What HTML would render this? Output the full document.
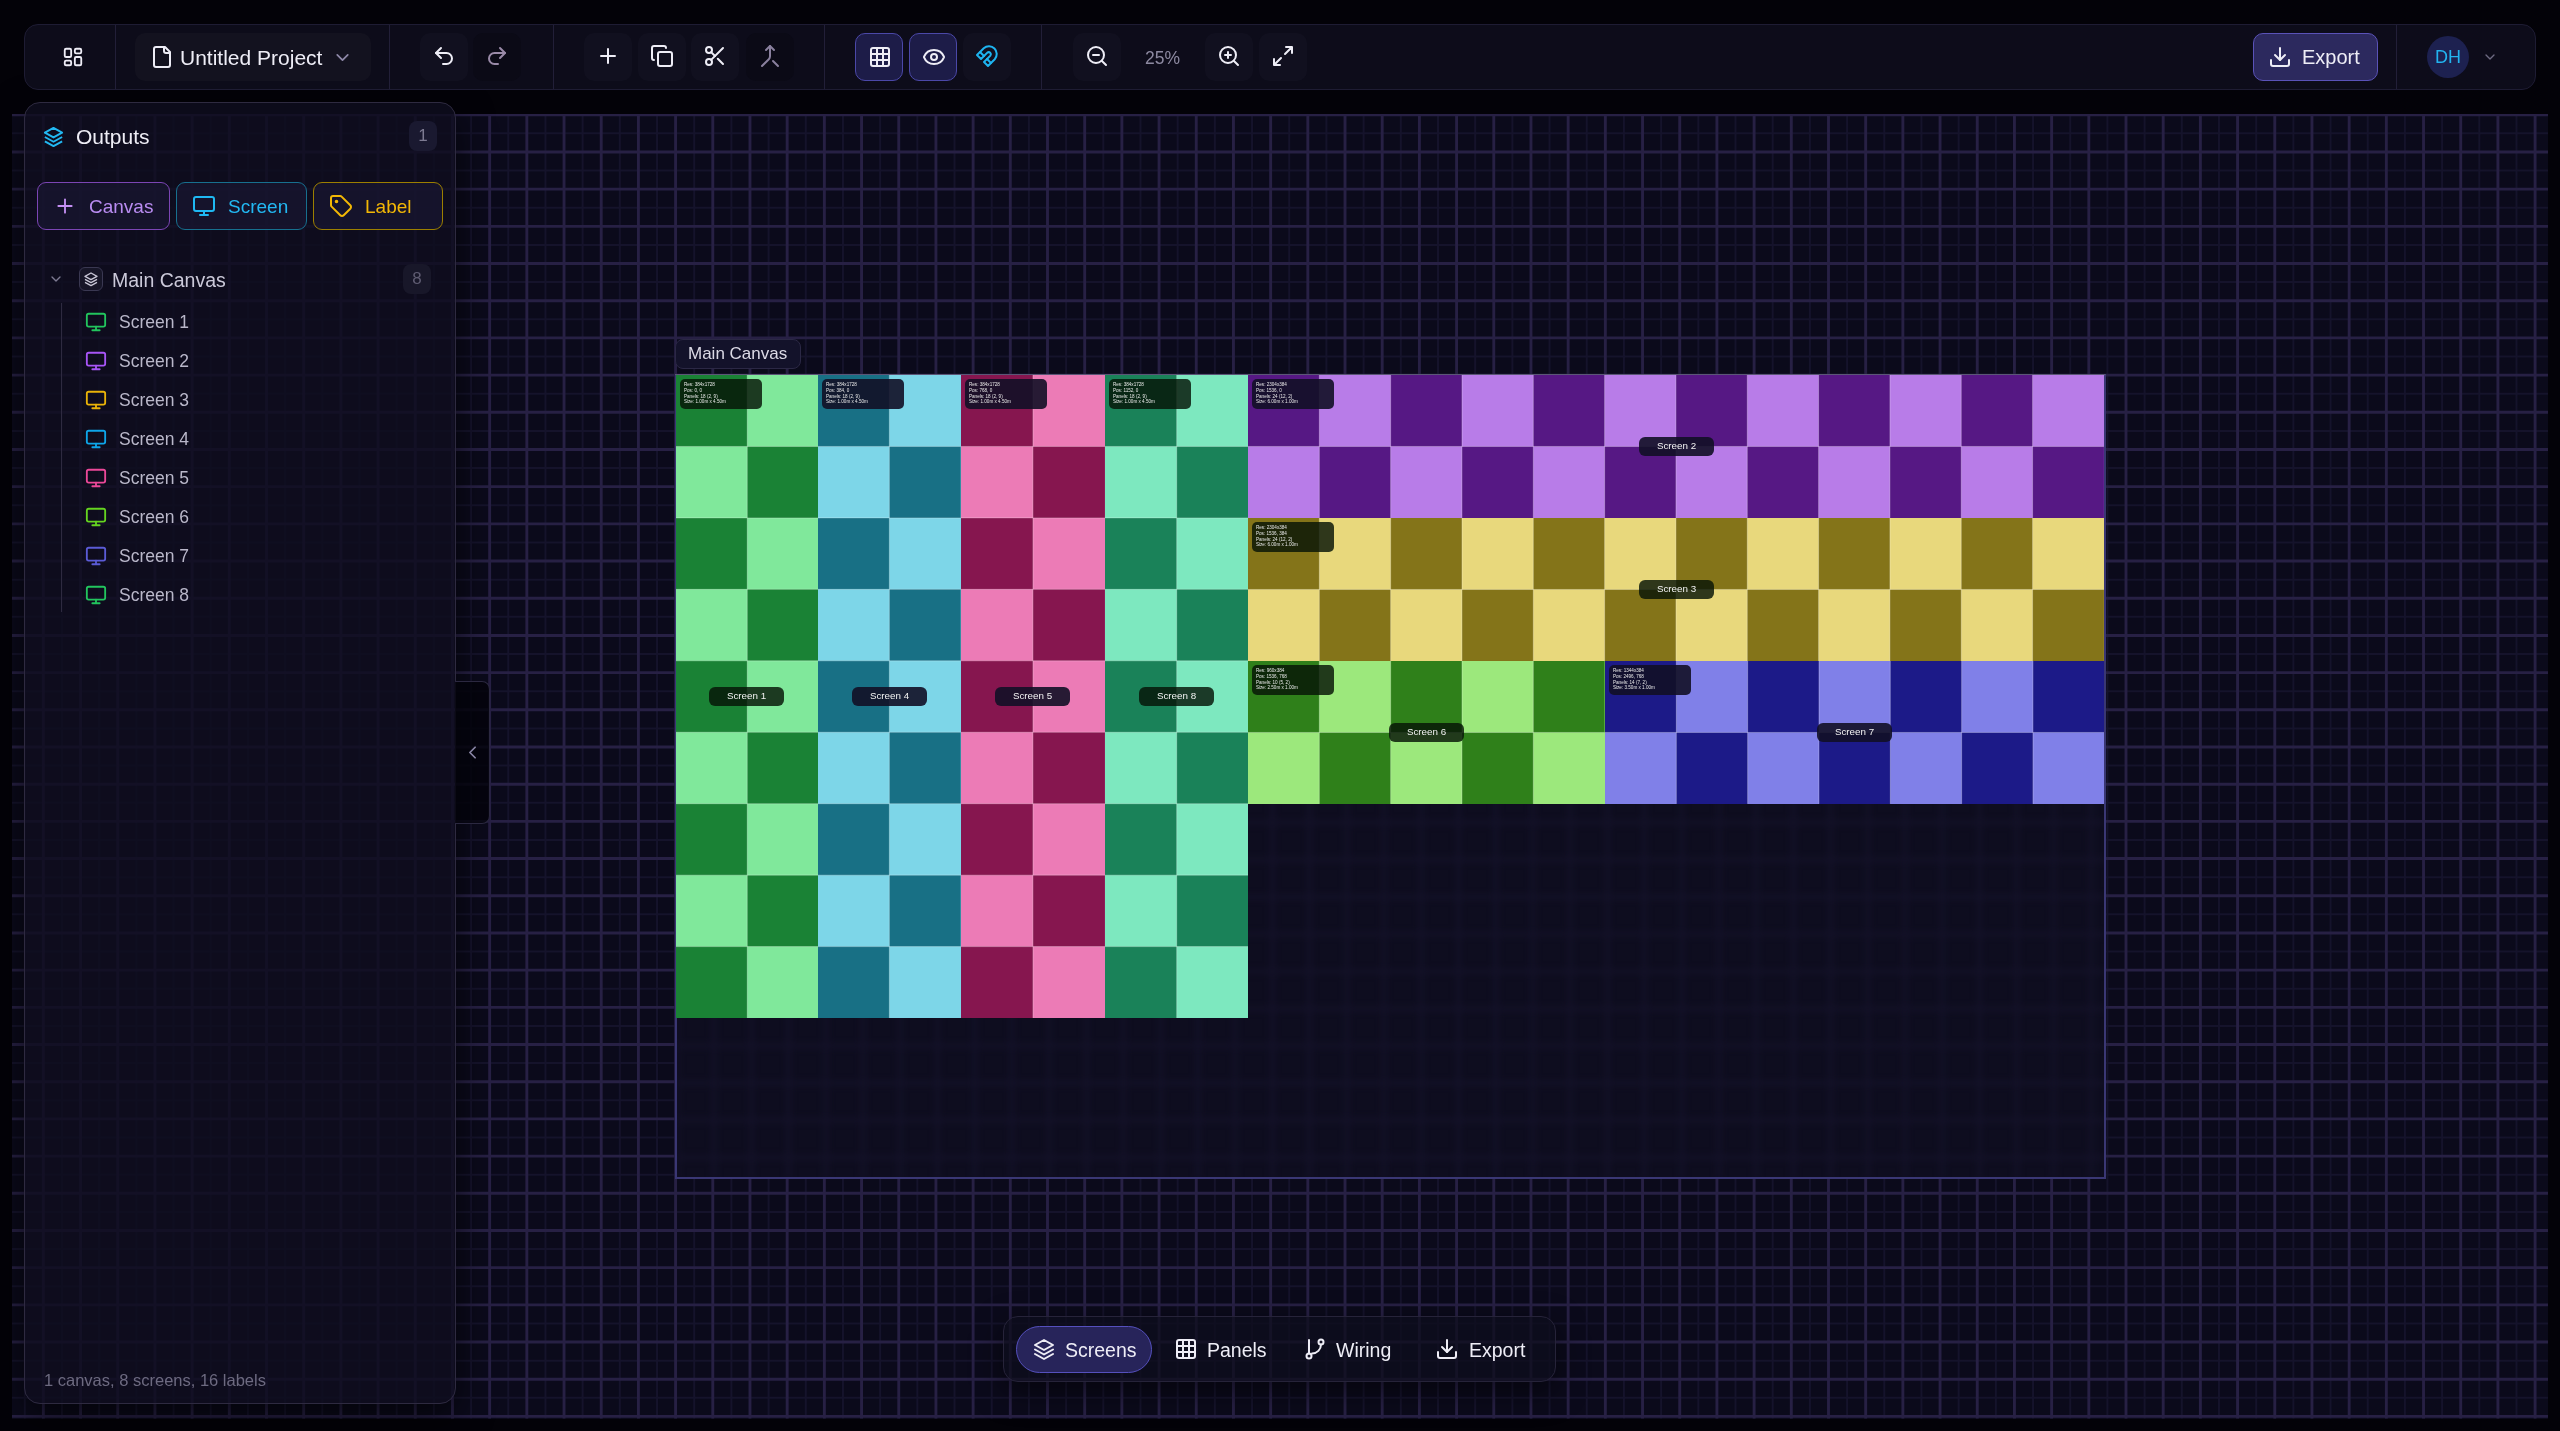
<!DOCTYPE html>
<html><head><meta charset="utf-8"><title>Untitled Project</title>
<style>
*{box-sizing:border-box;margin:0;padding:0}
html,body{width:2560px;height:1431px;overflow:hidden;background:#030208;font-family:"Liberation Sans",sans-serif;color:#e8e6f0}
.abs{position:absolute}
.t{will-change:transform}
svg{display:block}
.tb{position:absolute;left:24px;top:24px;width:2512px;height:66px;border-radius:14px;background:#0d0c1a;border:1px solid #1e1c33}
.sep{position:absolute;top:25px;width:1px;height:64px;background:#221f38}
.ib{position:absolute;top:33px;width:48px;height:48px;border-radius:10px;background:#11101f}
.ib svg{position:absolute;left:12px;top:10.5px}
.act{background:#1d1c48;border:1px solid #4b48a8}
.side{position:absolute;left:24px;top:102px;width:432px;height:1302px;border-radius:16px;background:rgba(15,14,30,0.82);border:1px solid #2e2a40;box-shadow:0 12px 36px rgba(0,0,0,0.65)}
.btn{position:absolute;top:182px;height:48px;border-radius:9px;background:rgba(24,22,48,0.75);border:1.2px solid}
.row{position:absolute;left:87px;height:20px}
.row span{position:absolute;left:32px;top:-2px;font-size:17.5px;color:#b9b7c9;white-space:nowrap}
.dock{position:absolute;left:1003px;top:1316px;width:553px;height:66px;border-radius:15px;background:rgba(14,13,28,0.74);border:1px solid #262339;box-shadow:0 10px 30px rgba(0,0,0,0.5)}
.dbtn{position:absolute;top:9px;height:47px;border-radius:24px}
.dbtn span{position:absolute;top:11px;font-size:19.5px;color:#e6e4f0;white-space:nowrap}
.pill{will-change:transform;position:absolute;height:19px;border-radius:6px;font-size:9.8px;color:#f2f2f2;text-align:center;line-height:18px;white-space:nowrap}
.badge{will-change:transform;position:absolute;width:82px;height:30px;border-radius:5px;font-size:5.6px;line-height:6.95px;color:#e8e8e8;padding:2.6px 0 0 4px;white-space:nowrap}
</style></head><body>

<div class="abs" style="left:12px;top:114px;width:2536px;height:1304.5px;background:#0b0a1b;overflow:hidden">
<svg width="2536" height="1304.5" viewBox="12 114 2536 1304.5">
<path d="M-12.41 114V1418.5M24.78 114V1418.5M61.97 114V1418.5M99.16 114V1418.5M136.35 114V1418.5M173.54 114V1418.5M210.73 114V1418.5M247.92 114V1418.5M285.11 114V1418.5M322.30 114V1418.5M359.49 114V1418.5M396.68 114V1418.5M433.87 114V1418.5M471.06 114V1418.5M508.25 114V1418.5M545.44 114V1418.5M582.62 114V1418.5M619.82 114V1418.5M657.01 114V1418.5M694.20 114V1418.5M731.38 114V1418.5M768.58 114V1418.5M805.77 114V1418.5M842.96 114V1418.5M880.14 114V1418.5M917.34 114V1418.5M954.53 114V1418.5M991.72 114V1418.5M1028.90 114V1418.5M1066.10 114V1418.5M1103.29 114V1418.5M1140.48 114V1418.5M1177.66 114V1418.5M1214.86 114V1418.5M1252.04 114V1418.5M1289.23 114V1418.5M1326.42 114V1418.5M1363.62 114V1418.5M1400.81 114V1418.5M1438.00 114V1418.5M1475.19 114V1418.5M1512.38 114V1418.5M1549.56 114V1418.5M1586.75 114V1418.5M1623.94 114V1418.5M1661.13 114V1418.5M1698.33 114V1418.5M1735.52 114V1418.5M1772.71 114V1418.5M1809.89 114V1418.5M1847.08 114V1418.5M1884.27 114V1418.5M1921.46 114V1418.5M1958.65 114V1418.5M1995.85 114V1418.5M2033.04 114V1418.5M2070.22 114V1418.5M2107.41 114V1418.5M2144.60 114V1418.5M2181.79 114V1418.5M2218.98 114V1418.5M2256.17 114V1418.5M2293.36 114V1418.5M2330.55 114V1418.5M2367.74 114V1418.5M2404.93 114V1418.5M2442.12 114V1418.5M2479.31 114V1418.5M2516.50 114V1418.5M2553.69 114V1418.5M2590.88 114V1418.5M12 58.99H2548M12 96.18H2548M12 133.37H2548M12 170.56H2548M12 207.75H2548M12 244.94H2548M12 282.12H2548M12 319.32H2548M12 356.50H2548M12 393.70H2548M12 430.88H2548M12 468.08H2548M12 505.26H2548M12 542.46H2548M12 579.64H2548M12 616.84H2548M12 654.03H2548M12 691.22H2548M12 728.40H2548M12 765.60H2548M12 802.79H2548M12 839.98H2548M12 877.16H2548M12 914.36H2548M12 951.54H2548M12 988.74H2548M12 1025.92H2548M12 1063.12H2548M12 1100.31H2548M12 1137.50H2548M12 1174.69H2548M12 1211.88H2548M12 1249.06H2548M12 1286.25H2548M12 1323.44H2548M12 1360.63H2548M12 1397.83H2548M12 1435.02H2548M12 1472.21H2548" stroke="#15132b" stroke-width="2" fill="none"/>
<path d="M-31.01 114V1418.5M6.18 114V1418.5M43.37 114V1418.5M80.56 114V1418.5M117.75 114V1418.5M154.94 114V1418.5M192.13 114V1418.5M229.32 114V1418.5M266.51 114V1418.5M303.70 114V1418.5M340.89 114V1418.5M378.08 114V1418.5M415.27 114V1418.5M452.46 114V1418.5M489.65 114V1418.5M526.84 114V1418.5M564.03 114V1418.5M601.22 114V1418.5M638.41 114V1418.5M675.60 114V1418.5M712.79 114V1418.5M749.98 114V1418.5M787.17 114V1418.5M824.36 114V1418.5M861.55 114V1418.5M898.74 114V1418.5M935.93 114V1418.5M973.12 114V1418.5M1010.31 114V1418.5M1047.50 114V1418.5M1084.69 114V1418.5M1121.88 114V1418.5M1159.07 114V1418.5M1196.26 114V1418.5M1233.45 114V1418.5M1270.64 114V1418.5M1307.83 114V1418.5M1345.02 114V1418.5M1382.21 114V1418.5M1419.40 114V1418.5M1456.59 114V1418.5M1493.78 114V1418.5M1530.97 114V1418.5M1568.16 114V1418.5M1605.35 114V1418.5M1642.54 114V1418.5M1679.73 114V1418.5M1716.92 114V1418.5M1754.11 114V1418.5M1791.30 114V1418.5M1828.49 114V1418.5M1865.68 114V1418.5M1902.87 114V1418.5M1940.06 114V1418.5M1977.25 114V1418.5M2014.44 114V1418.5M2051.63 114V1418.5M2088.82 114V1418.5M2126.01 114V1418.5M2163.20 114V1418.5M2200.39 114V1418.5M2237.58 114V1418.5M2274.77 114V1418.5M2311.96 114V1418.5M2349.15 114V1418.5M2386.34 114V1418.5M2423.53 114V1418.5M2460.72 114V1418.5M2497.91 114V1418.5M2535.10 114V1418.5M2572.29 114V1418.5M12 40.39H2548M12 77.58H2548M12 114.77H2548M12 151.96H2548M12 189.15H2548M12 226.34H2548M12 263.53H2548M12 300.72H2548M12 337.91H2548M12 375.10H2548M12 412.29H2548M12 449.48H2548M12 486.67H2548M12 523.86H2548M12 561.05H2548M12 598.24H2548M12 635.43H2548M12 672.62H2548M12 709.81H2548M12 747.00H2548M12 784.19H2548M12 821.38H2548M12 858.57H2548M12 895.76H2548M12 932.95H2548M12 970.14H2548M12 1007.33H2548M12 1044.52H2548M12 1081.71H2548M12 1118.90H2548M12 1156.09H2548M12 1193.28H2548M12 1230.47H2548M12 1267.66H2548M12 1304.85H2548M12 1342.04H2548M12 1379.23H2548M12 1416.42H2548M12 1453.61H2548" stroke="#272044" stroke-width="2.9" fill="none"/>
</svg></div>
<div class="abs" style="left:674.5px;top:373.5px;width:1431.3px;height:805.7px;border:2px solid #3a3774;border-top:2px solid #57527a;background:#0e0d1f;overflow:hidden">
<svg class="abs" style="left:0;top:0;filter:blur(3px)" width="1429.02" height="803.82">
<path d="M0.00 0V803.82M37.21 0V803.82M74.43 0V803.82M111.64 0V803.82M148.86 0V803.82M186.07 0V803.82M223.28 0V803.82M260.50 0V803.82M297.71 0V803.82M334.93 0V803.82M372.14 0V803.82M409.35 0V803.82M446.57 0V803.82M483.78 0V803.82M521.00 0V803.82M558.21 0V803.82M595.42 0V803.82M632.64 0V803.82M669.85 0V803.82M707.07 0V803.82M744.28 0V803.82M781.49 0V803.82M818.71 0V803.82M855.92 0V803.82M893.14 0V803.82M930.35 0V803.82M967.56 0V803.82M1004.78 0V803.82M1041.99 0V803.82M1079.21 0V803.82M1116.42 0V803.82M1153.63 0V803.82M1190.85 0V803.82M1228.06 0V803.82M1265.28 0V803.82M1302.49 0V803.82M1339.70 0V803.82M1376.92 0V803.82M1414.13 0V803.82M0 0.00H1429.02M0 37.21H1429.02M0 74.43H1429.02M0 111.64H1429.02M0 148.86H1429.02M0 186.07H1429.02M0 223.28H1429.02M0 260.50H1429.02M0 297.71H1429.02M0 334.93H1429.02M0 372.14H1429.02M0 409.35H1429.02M0 446.57H1429.02M0 483.78H1429.02M0 521.00H1429.02M0 558.21H1429.02M0 595.42H1429.02M0 632.64H1429.02M0 669.85H1429.02M0 707.07H1429.02M0 744.28H1429.02M0 781.49H1429.02" stroke="#141229" stroke-width="4" fill="none"/>
</svg></div>
<div class="abs t" style="left:675px;top:339px;width:126px;height:30px;border-radius:8px;background:#13122a;border:1px solid #2b2845;font-size:17px;color:#dcdae6;line-height:28px;padding-left:12px;white-space:nowrap">Main Canvas</div>
<div class="abs" style="left:675.60px;top:374.90px;width:142.50px;height:643.06px;background:#80e89b;overflow:hidden">
<svg class="abs" style="left:0;top:0" width="142.50" height="643.06">
<path d="M0.00 0.00h71.25v71.45h-71.25zM71.25 71.45h71.25v71.45h-71.25zM0.00 142.90h71.25v71.45h-71.25zM71.25 214.35h71.25v71.45h-71.25zM0.00 285.80h71.25v71.45h-71.25zM71.25 357.25h71.25v71.45h-71.25zM0.00 428.71h71.25v71.45h-71.25zM71.25 500.16h71.25v71.45h-71.25zM0.00 571.61h71.25v71.45h-71.25z" fill="#1a8235"/>
<path d="M71.25 0V643.06M0 71.45H142.50M0 142.90H142.50M0 214.35H142.50M0 285.80H142.50M0 357.25H142.50M0 428.71H142.50M0 500.16H142.50M0 571.61H142.50" stroke="rgba(255,255,255,0.28)" stroke-width="1" fill="none"/>
</svg></div>
<div class="abs" style="left:818.10px;top:374.90px;width:142.70px;height:643.06px;background:#7dd6e8;overflow:hidden">
<svg class="abs" style="left:0;top:0" width="142.70" height="643.06">
<path d="M0.00 0.00h71.35v71.45h-71.35zM71.35 71.45h71.35v71.45h-71.35zM0.00 142.90h71.35v71.45h-71.35zM71.35 214.35h71.35v71.45h-71.35zM0.00 285.80h71.35v71.45h-71.35zM71.35 357.25h71.35v71.45h-71.35zM0.00 428.71h71.35v71.45h-71.35zM71.35 500.16h71.35v71.45h-71.35zM0.00 571.61h71.35v71.45h-71.35z" fill="#187085"/>
<path d="M71.35 0V643.06M0 71.45H142.70M0 142.90H142.70M0 214.35H142.70M0 285.80H142.70M0 357.25H142.70M0 428.71H142.70M0 500.16H142.70M0 571.61H142.70" stroke="rgba(255,255,255,0.28)" stroke-width="1" fill="none"/>
</svg></div>
<div class="abs" style="left:960.80px;top:374.90px;width:143.90px;height:643.06px;background:#ec7bb6;overflow:hidden">
<svg class="abs" style="left:0;top:0" width="143.90" height="643.06">
<path d="M0.00 0.00h71.95v71.45h-71.95zM71.95 71.45h71.95v71.45h-71.95zM0.00 142.90h71.95v71.45h-71.95zM71.95 214.35h71.95v71.45h-71.95zM0.00 285.80h71.95v71.45h-71.95zM71.95 357.25h71.95v71.45h-71.95zM0.00 428.71h71.95v71.45h-71.95zM71.95 500.16h71.95v71.45h-71.95zM0.00 571.61h71.95v71.45h-71.95z" fill="#86164f"/>
<path d="M71.95 0V643.06M0 71.45H143.90M0 142.90H143.90M0 214.35H143.90M0 285.80H143.90M0 357.25H143.90M0 428.71H143.90M0 500.16H143.90M0 571.61H143.90" stroke="rgba(255,255,255,0.28)" stroke-width="1" fill="none"/>
</svg></div>
<div class="abs" style="left:1104.70px;top:374.90px;width:143.40px;height:643.06px;background:#7de8bf;overflow:hidden">
<svg class="abs" style="left:0;top:0" width="143.40" height="643.06">
<path d="M0.00 0.00h71.70v71.45h-71.70zM71.70 71.45h71.70v71.45h-71.70zM0.00 142.90h71.70v71.45h-71.70zM71.70 214.35h71.70v71.45h-71.70zM0.00 285.80h71.70v71.45h-71.70zM71.70 357.25h71.70v71.45h-71.70zM0.00 428.71h71.70v71.45h-71.70zM71.70 500.16h71.70v71.45h-71.70zM0.00 571.61h71.70v71.45h-71.70z" fill="#1a8259"/>
<path d="M71.70 0V643.06M0 71.45H143.40M0 142.90H143.40M0 214.35H143.40M0 285.80H143.40M0 357.25H143.40M0 428.71H143.40M0 500.16H143.40M0 571.61H143.40" stroke="rgba(255,255,255,0.28)" stroke-width="1" fill="none"/>
</svg></div>
<div class="abs" style="left:1248.10px;top:374.90px;width:855.90px;height:142.90px;background:#b87ce8;overflow:hidden">
<svg class="abs" style="left:0;top:0" width="855.90" height="142.90">
<path d="M0.00 0.00h71.33v71.45h-71.33zM142.65 0.00h71.33v71.45h-71.33zM285.30 0.00h71.33v71.45h-71.33zM427.95 0.00h71.33v71.45h-71.33zM570.60 0.00h71.33v71.45h-71.33zM713.25 0.00h71.33v71.45h-71.33zM71.33 71.45h71.33v71.45h-71.33zM213.98 71.45h71.33v71.45h-71.33zM356.62 71.45h71.33v71.45h-71.33zM499.28 71.45h71.33v71.45h-71.33zM641.93 71.45h71.33v71.45h-71.33zM784.58 71.45h71.33v71.45h-71.33z" fill="#561884"/>
<path d="M71.33 0V142.90M142.65 0V142.90M213.98 0V142.90M285.30 0V142.90M356.62 0V142.90M427.95 0V142.90M499.28 0V142.90M570.60 0V142.90M641.93 0V142.90M713.25 0V142.90M784.58 0V142.90M0 71.45H855.90" stroke="rgba(255,255,255,0.28)" stroke-width="1" fill="none"/>
</svg></div>
<div class="abs" style="left:1248.10px;top:517.80px;width:855.90px;height:142.90px;background:#e8d87c;overflow:hidden">
<svg class="abs" style="left:0;top:0" width="855.90" height="142.90">
<path d="M0.00 0.00h71.33v71.45h-71.33zM142.65 0.00h71.33v71.45h-71.33zM285.30 0.00h71.33v71.45h-71.33zM427.95 0.00h71.33v71.45h-71.33zM570.60 0.00h71.33v71.45h-71.33zM713.25 0.00h71.33v71.45h-71.33zM71.33 71.45h71.33v71.45h-71.33zM213.98 71.45h71.33v71.45h-71.33zM356.62 71.45h71.33v71.45h-71.33zM499.28 71.45h71.33v71.45h-71.33zM641.93 71.45h71.33v71.45h-71.33zM784.58 71.45h71.33v71.45h-71.33z" fill="#847419"/>
<path d="M71.33 0V142.90M142.65 0V142.90M213.98 0V142.90M285.30 0V142.90M356.62 0V142.90M427.95 0V142.90M499.28 0V142.90M570.60 0V142.90M641.93 0V142.90M713.25 0V142.90M784.58 0V142.90M0 71.45H855.90" stroke="rgba(255,255,255,0.28)" stroke-width="1" fill="none"/>
</svg></div>
<div class="abs" style="left:1248.10px;top:660.70px;width:356.62px;height:142.90px;background:#9ce87c;overflow:hidden">
<svg class="abs" style="left:0;top:0" width="356.62" height="142.90">
<path d="M0.00 0.00h71.33v71.45h-71.33zM142.65 0.00h71.33v71.45h-71.33zM285.30 0.00h71.33v71.45h-71.33zM71.33 71.45h71.33v71.45h-71.33zM213.98 71.45h71.33v71.45h-71.33z" fill="#2f801a"/>
<path d="M71.33 0V142.90M142.65 0V142.90M213.98 0V142.90M285.30 0V142.90M0 71.45H356.62" stroke="rgba(255,255,255,0.28)" stroke-width="1" fill="none"/>
</svg></div>
<div class="abs" style="left:1604.72px;top:660.70px;width:499.28px;height:142.90px;background:#8080e8;overflow:hidden">
<svg class="abs" style="left:0;top:0" width="499.28" height="142.90">
<path d="M0.00 0.00h71.33v71.45h-71.33zM142.65 0.00h71.33v71.45h-71.33zM285.30 0.00h71.33v71.45h-71.33zM427.95 0.00h71.33v71.45h-71.33zM71.33 71.45h71.33v71.45h-71.33zM213.98 71.45h71.33v71.45h-71.33zM356.63 71.45h71.33v71.45h-71.33z" fill="#1c1a88"/>
<path d="M71.33 0V142.90M142.65 0V142.90M213.98 0V142.90M285.30 0V142.90M356.63 0V142.90M427.95 0V142.90M0 71.45H499.28" stroke="rgba(255,255,255,0.28)" stroke-width="1" fill="none"/>
</svg></div>
<div class="badge" style="left:679.60px;top:378.90px;background:rgba(6,20,6,0.82)"><div style="transform:scale(0.82);transform-origin:0 0">Res: 384x1728<br>Pos: 0, 0<br>Panels: 18 (2, 9)<br>Size: 1.00m x 4.50m</div></div>
<div class="pill" style="left:709.35px;top:686.93px;width:75px;background:rgba(6,20,6,0.82)">Screen 1</div>
<div class="badge" style="left:822.10px;top:378.90px;background:rgba(18,16,38,0.9)"><div style="transform:scale(0.82);transform-origin:0 0">Res: 384x1728<br>Pos: 384, 0<br>Panels: 18 (2, 9)<br>Size: 1.00m x 4.50m</div></div>
<div class="pill" style="left:851.95px;top:686.93px;width:75px;background:rgba(18,16,38,0.9)">Screen 4</div>
<div class="badge" style="left:964.80px;top:378.90px;background:rgba(18,16,38,0.9)"><div style="transform:scale(0.82);transform-origin:0 0">Res: 384x1728<br>Pos: 768, 0<br>Panels: 18 (2, 9)<br>Size: 1.00m x 4.50m</div></div>
<div class="pill" style="left:995.25px;top:686.93px;width:75px;background:rgba(18,16,38,0.9)">Screen 5</div>
<div class="badge" style="left:1108.70px;top:378.90px;background:rgba(6,20,6,0.82)"><div style="transform:scale(0.82);transform-origin:0 0">Res: 384x1728<br>Pos: 1152, 0<br>Panels: 18 (2, 9)<br>Size: 1.00m x 4.50m</div></div>
<div class="pill" style="left:1138.90px;top:686.93px;width:75px;background:rgba(6,20,6,0.82)">Screen 8</div>
<div class="badge" style="left:1252.10px;top:378.90px;background:rgba(18,16,38,0.9)"><div style="transform:scale(0.82);transform-origin:0 0">Res: 2304x384<br>Pos: 1536, 0<br>Panels: 24 (12, 2)<br>Size: 6.00m x 1.00m</div></div>
<div class="pill" style="left:1638.55px;top:436.85px;width:75px;background:rgba(18,16,38,0.9)">Screen 2</div>
<div class="badge" style="left:1252.10px;top:521.80px;background:rgba(6,20,6,0.82)"><div style="transform:scale(0.82);transform-origin:0 0">Res: 2304x384<br>Pos: 1536, 384<br>Panels: 24 (12, 2)<br>Size: 6.00m x 1.00m</div></div>
<div class="pill" style="left:1638.55px;top:579.75px;width:75px;background:rgba(6,20,6,0.82)">Screen 3</div>
<div class="badge" style="left:1252.10px;top:664.70px;background:rgba(6,20,6,0.82)"><div style="transform:scale(0.82);transform-origin:0 0">Res: 960x384<br>Pos: 1536, 768<br>Panels: 10 (5, 2)<br>Size: 2.50m x 1.00m</div></div>
<div class="pill" style="left:1388.91px;top:722.65px;width:75px;background:rgba(6,20,6,0.82)">Screen 6</div>
<div class="badge" style="left:1608.72px;top:664.70px;background:rgba(18,16,38,0.9)"><div style="transform:scale(0.82);transform-origin:0 0">Res: 1344x384<br>Pos: 2496, 768<br>Panels: 14 (7, 2)<br>Size: 3.50m x 1.00m</div></div>
<div class="pill" style="left:1816.86px;top:722.65px;width:75px;background:rgba(18,16,38,0.9)">Screen 7</div>
<div class="abs" style="left:675px;top:373.7px;width:1430px;height:1.8px;background:#5b5676"></div>
<div class="side"></div>
<svg class="abs" style="left:42px;top:125px" width="23" height="23" viewBox="0 0 24 24" fill="none" stroke="#22b8f2" stroke-width="2" stroke-linejoin="round"><path d="M12 3 3 8l9 5 9-5z"/><path d="M3 12.5l9 5 9-5"/><path d="M3 17l9 5 9-5"/></svg>
<div class="abs t" style="left:76px;top:125px;font-size:21px;color:#eeedf5;white-space:nowrap">Outputs</div>
<div class="abs t" style="left:409px;top:121px;width:28px;height:30px;border-radius:8px;background:#1a1930;color:#7d7a92;font-size:17px;text-align:center;line-height:30px">1</div>
<div class="btn" style="left:37px;width:133px;border-color:#7b45b4"></div>
<svg class="abs" style="left:55px;top:196px" width="20" height="20" viewBox="0 0 24 24" fill="none" stroke="#c590f5" stroke-width="2.2" stroke-linecap="round"><path d="M12 4v16M4 12h16"/></svg>
<div class="abs t" style="left:89px;top:196px;font-size:19px;color:#b98cf2;white-space:nowrap">Canvas</div>
<div class="btn" style="left:176px;width:131px;border-color:#17708f"></div>
<svg class="abs" style="left:192px;top:194px" width="24" height="24" viewBox="0 0 24 24" fill="none" stroke="#1fb8f2" stroke-width="2" stroke-linecap="round" stroke-linejoin="round"><rect x="2" y="3" width="20" height="14" rx="2"/><path d="M8 21h8M12 17v4"/></svg>
<div class="abs t" style="left:228px;top:196px;font-size:19px;color:#22b8f2;white-space:nowrap">Screen</div>
<div class="btn" style="left:313px;width:130px;border-color:#9c7f00"></div>
<svg class="abs" style="left:329px;top:194px" width="24" height="24" viewBox="0 0 24 24" fill="none" stroke="#f2b705" stroke-width="2" stroke-linecap="round" stroke-linejoin="round"><path d="M12.6 2.6A2 2 0 0 0 11.2 2H4a2 2 0 0 0-2 2v7.2a2 2 0 0 0 .6 1.4l8.7 8.7a2.4 2.4 0 0 0 3.4 0l6.6-6.6a2.4 2.4 0 0 0 0-3.4z"/><circle cx="7.5" cy="7.5" r=".8" fill="#f2b705"/></svg>
<div class="abs t" style="left:365px;top:196px;font-size:19px;color:#f2b705;white-space:nowrap">Label</div>
<svg class="abs" style="left:48px;top:271px" width="16" height="16" viewBox="0 0 24 24" fill="none" stroke="#7d7a92" stroke-width="2" stroke-linecap="round" stroke-linejoin="round"><path d="m6 9 6 6 6-6"/></svg>
<div class="abs" style="left:79px;top:267px;width:24px;height:24px;border-radius:6px;border:1px solid #3a3852;background:#171628"></div>
<svg class="abs" style="left:83px;top:271px" width="16" height="16" viewBox="0 0 24 24" fill="none" stroke="#c8c6d6" stroke-width="2" stroke-linejoin="round"><path d="M12 3 3 8l9 5 9-5z"/><path d="M3 12.5l9 5 9-5"/><path d="M3 17l9 5 9-5"/></svg>
<div class="abs t" style="left:112px;top:269px;font-size:19.5px;color:#cbc9d9;white-space:nowrap">Main Canvas</div>
<div class="abs t" style="left:403px;top:264px;width:28px;height:30px;border-radius:8px;background:#181729;color:#5f5c72;font-size:17px;text-align:center;line-height:30px">8</div>
<div class="abs" style="left:61px;top:303px;width:1px;height:309px;background:#2e2a40"></div>
<svg class="abs" style="left:85px;top:311.20px" width="22" height="22" viewBox="0 0 24 24" fill="none" stroke="#22c55e" stroke-width="2" stroke-linecap="round" stroke-linejoin="round"><rect x="2" y="3" width="20" height="14" rx="2"/><path d="M8 21h8M12 17v4"/></svg>
<div class="abs t" style="left:119px;top:312.20px;font-size:17.5px;color:#b9b7c9;white-space:nowrap">Screen 1</div>
<svg class="abs" style="left:85px;top:350.23px" width="22" height="22" viewBox="0 0 24 24" fill="none" stroke="#a855f7" stroke-width="2" stroke-linecap="round" stroke-linejoin="round"><rect x="2" y="3" width="20" height="14" rx="2"/><path d="M8 21h8M12 17v4"/></svg>
<div class="abs t" style="left:119px;top:351.23px;font-size:17.5px;color:#b9b7c9;white-space:nowrap">Screen 2</div>
<svg class="abs" style="left:85px;top:389.26px" width="22" height="22" viewBox="0 0 24 24" fill="none" stroke="#eab308" stroke-width="2" stroke-linecap="round" stroke-linejoin="round"><rect x="2" y="3" width="20" height="14" rx="2"/><path d="M8 21h8M12 17v4"/></svg>
<div class="abs t" style="left:119px;top:390.26px;font-size:17.5px;color:#b9b7c9;white-space:nowrap">Screen 3</div>
<svg class="abs" style="left:85px;top:428.29px" width="22" height="22" viewBox="0 0 24 24" fill="none" stroke="#0ea5e9" stroke-width="2" stroke-linecap="round" stroke-linejoin="round"><rect x="2" y="3" width="20" height="14" rx="2"/><path d="M8 21h8M12 17v4"/></svg>
<div class="abs t" style="left:119px;top:429.29px;font-size:17.5px;color:#b9b7c9;white-space:nowrap">Screen 4</div>
<svg class="abs" style="left:85px;top:467.32px" width="22" height="22" viewBox="0 0 24 24" fill="none" stroke="#ec4899" stroke-width="2" stroke-linecap="round" stroke-linejoin="round"><rect x="2" y="3" width="20" height="14" rx="2"/><path d="M8 21h8M12 17v4"/></svg>
<div class="abs t" style="left:119px;top:468.32px;font-size:17.5px;color:#b9b7c9;white-space:nowrap">Screen 5</div>
<svg class="abs" style="left:85px;top:506.35px" width="22" height="22" viewBox="0 0 24 24" fill="none" stroke="#65d420" stroke-width="2" stroke-linecap="round" stroke-linejoin="round"><rect x="2" y="3" width="20" height="14" rx="2"/><path d="M8 21h8M12 17v4"/></svg>
<div class="abs t" style="left:119px;top:507.35px;font-size:17.5px;color:#b9b7c9;white-space:nowrap">Screen 6</div>
<svg class="abs" style="left:85px;top:545.38px" width="22" height="22" viewBox="0 0 24 24" fill="none" stroke="#5b5bd6" stroke-width="2" stroke-linecap="round" stroke-linejoin="round"><rect x="2" y="3" width="20" height="14" rx="2"/><path d="M8 21h8M12 17v4"/></svg>
<div class="abs t" style="left:119px;top:546.38px;font-size:17.5px;color:#b9b7c9;white-space:nowrap">Screen 7</div>
<svg class="abs" style="left:85px;top:584.41px" width="22" height="22" viewBox="0 0 24 24" fill="none" stroke="#22c55e" stroke-width="2" stroke-linecap="round" stroke-linejoin="round"><rect x="2" y="3" width="20" height="14" rx="2"/><path d="M8 21h8M12 17v4"/></svg>
<div class="abs t" style="left:119px;top:585.41px;font-size:17.5px;color:#b9b7c9;white-space:nowrap">Screen 8</div>
<div class="abs t" style="left:44px;top:1371px;font-size:16.5px;color:#6d6a80;white-space:nowrap">1 canvas, 8 screens, 16 labels</div>
<div class="abs" style="left:455px;top:681px;width:35px;height:143px;border-radius:0 8px 8px 0;background:rgba(3,2,10,0.8);border:1px solid #2b2840;border-left:none"></div>
<svg class="abs" style="left:462px;top:742px" width="21" height="21" viewBox="0 0 24 24" fill="none" stroke="#8a86a6" stroke-width="2" stroke-linecap="round" stroke-linejoin="round"><path d="m15 18-6-6 6-6"/></svg>
<div class="tb"></div>
<div class="sep" style="left:115.2px"></div>
<div class="sep" style="left:389.1px"></div>
<div class="sep" style="left:552.8px"></div>
<div class="sep" style="left:824.4px"></div>
<div class="sep" style="left:1041.1px"></div>
<div class="sep" style="left:2396.0px"></div>
<svg class="abs" style="left:62px;top:46px" width="22" height="22" viewBox="0 0 24 24" fill="none" stroke="#eeedf6" stroke-width="2" stroke-linecap="round" stroke-linejoin="round"><rect x="3" y="3" width="7" height="9" rx="1.5"/><rect x="14" y="3" width="7" height="5" rx="1.5"/><rect x="14" y="12" width="7" height="9" rx="1.5"/><rect x="3" y="16" width="7" height="5" rx="1.5"/></svg>
<div class="abs" style="left:135px;top:33px;width:236px;height:48px;border-radius:10px;background:#13121f"></div>
<svg class="abs" style="left:150px;top:45px" width="24" height="24" viewBox="0 0 24 24" fill="none" stroke="#eeedf6" stroke-width="2" stroke-linecap="round" stroke-linejoin="round"><path d="M15 2H6a2 2 0 0 0-2 2v16a2 2 0 0 0 2 2h12a2 2 0 0 0 2-2V7z"/><path d="M14 2v4a2 2 0 0 0 2 2h4"/></svg>
<div class="abs t" style="left:180px;top:46px;font-size:21px;color:#eeedf6;white-space:nowrap">Untitled Project</div>
<svg class="abs" style="left:332px;top:47px" width="21" height="21" viewBox="0 0 24 24" fill="none" stroke="#8e88a8" stroke-width="2" stroke-linecap="round" stroke-linejoin="round"><path d="m6 9 6 6 6-6"/></svg>
<div class="ib" style="left:419.70px"><svg width="24" height="24" viewBox="0 0 24 24" fill="none" stroke="#eeedf6" stroke-width="2" stroke-linecap="round" stroke-linejoin="round"><path d="M9 14 4 9l5-5"/><path d="M4 9h10.5a5.5 5.5 0 0 1 5.5 5.5a5.5 5.5 0 0 1-5.5 5.5H11"/></svg></div>
<div class="ib" style="left:473.40px;background:#0b0a16"><svg width="24" height="24" viewBox="0 0 24 24" fill="none" stroke="#9a8aa8" stroke-width="2" stroke-linecap="round" stroke-linejoin="round"><path d="m15 14 5-5-5-5"/><path d="M20 9H9.5A5.5 5.5 0 0 0 4 14.5A5.5 5.5 0 0 0 9.5 20H13"/></svg></div>
<div class="ib" style="left:583.90px"><svg width="24" height="24" viewBox="0 0 24 24" fill="none" stroke="#eeedf6" stroke-width="2" stroke-linecap="round" stroke-linejoin="round"><path d="M5 12h14M12 5v14"/></svg></div>
<div class="ib" style="left:638.00px"><svg width="24" height="24" viewBox="0 0 24 24" fill="none" stroke="#eeedf6" stroke-width="2" stroke-linecap="round" stroke-linejoin="round"><rect width="14" height="14" x="8" y="8" rx="2"/><path d="M4 16c-1.1 0-2-.9-2-2V4c0-1.1.9-2 2-2h10c1.1 0 2 .9 2 2"/></svg></div>
<div class="ib" style="left:691.20px"><svg width="24" height="24" viewBox="0 0 24 24" fill="none" stroke="#eeedf6" stroke-width="2" stroke-linecap="round" stroke-linejoin="round"><circle cx="6" cy="6" r="3"/><path d="M8.12 8.12 12 12"/><path d="M20 4 8.12 15.88"/><circle cx="6" cy="18" r="3"/><path d="M14.8 14.8 20 20"/></svg></div>
<div class="ib" style="left:745.90px;background:#0b0a16"><svg width="24" height="24" viewBox="0 0 24 24" fill="none" stroke="#8a809e" stroke-width="2" stroke-linecap="round" stroke-linejoin="round"><path d="m8 6 4-4 4 4"/><path d="M12 2v10.3a4 4 0 0 1-1.172 2.872L4 22"/><path d="m20 22-5-5"/></svg></div>
<div class="ib act" style="left:854.80px"><svg width="24" height="24" viewBox="0 0 24 24" fill="none" stroke="#eeedf6" stroke-width="2" stroke-linecap="round" stroke-linejoin="round"><rect x="3" y="3" width="18" height="18" rx="2"/><path d="M3 9h18M3 15h18M9 3v18M15 3v18"/></svg></div>
<div class="ib act" style="left:909.00px"><svg width="24" height="24" viewBox="0 0 24 24" fill="none" stroke="#eeedf6" stroke-width="2" stroke-linecap="round" stroke-linejoin="round"><path d="M2.062 12.348a1 1 0 0 1 0-.696 10.75 10.75 0 0 1 19.876 0 1 1 0 0 1 0 .696 10.75 10.75 0 0 1-19.876 0"/><circle cx="12" cy="12" r="3"/></svg></div>
<div class="ib" style="left:962.90px"><svg width="24" height="24" viewBox="0 0 24 24" fill="none" stroke="#1eb4f0" stroke-width="2" stroke-linecap="round" stroke-linejoin="round"><path d="m6 15-4-4 6.75-6.77a7.79 7.79 0 0 1 11 11L13 22l-4-4 6.39-6.36a2.14 2.14 0 0 0-3-3L6 15"/><path d="m5 8 4 4"/><path d="m12 15 4 4"/></svg></div>
<div class="ib" style="left:1072.80px"><svg width="24" height="24" viewBox="0 0 24 24" fill="none" stroke="#eeedf6" stroke-width="2" stroke-linecap="round" stroke-linejoin="round"><circle cx="11" cy="11" r="8"/><path d="m21 21-4.3-4.3M8 11h6"/></svg></div>
<div class="abs t" style="left:1145px;top:47.5px;font-size:17.5px;color:#8c89a0;white-space:nowrap">25%</div>
<div class="ib" style="left:1204.70px"><svg width="24" height="24" viewBox="0 0 24 24" fill="none" stroke="#eeedf6" stroke-width="2" stroke-linecap="round" stroke-linejoin="round"><circle cx="11" cy="11" r="8"/><path d="m21 21-4.3-4.3M11 8v6M8 11h6"/></svg></div>
<div class="ib" style="left:1258.60px"><svg width="24" height="24" viewBox="0 0 24 24" fill="none" stroke="#eeedf6" stroke-width="2" stroke-linecap="round" stroke-linejoin="round"><path d="M15 3h6v6M9 21H3v-6M21 3l-7 7M3 21l7-7"/></svg></div>
<div class="abs" style="left:2253px;top:33px;width:125px;height:48px;border-radius:10px;background:#2c295e;border:1.5px solid #5a52b8"></div>
<svg class="abs" style="left:2268px;top:45px" width="24" height="24" viewBox="0 0 24 24" fill="none" stroke="#eeedf6" stroke-width="2" stroke-linecap="round" stroke-linejoin="round"><path d="M21 15v4a2 2 0 0 1-2 2H5a2 2 0 0 1-2-2v-4"/><path d="m7 10 5 5 5-5"/><path d="M12 15V3"/></svg>
<div class="abs t" style="left:2302px;top:46px;font-size:20px;color:#eeedf6;white-space:nowrap">Export</div>
<div class="abs t" style="left:2427px;top:36px;width:42px;height:42px;border-radius:21px;background:#1d2150;color:#22b4f0;font-size:18px;text-align:center;line-height:42px">DH</div>
<svg class="abs" style="left:2482px;top:49px" width="16" height="16" viewBox="0 0 24 24" fill="none" stroke="#6e6a82" stroke-width="2" stroke-linecap="round" stroke-linejoin="round"><path d="m6 9 6 6 6-6"/></svg>
<div class="dock">
<div class="dbtn" style="left:12px;width:136px;background:#27245a;border:1.5px solid #5550bd"></div>
</div>
<svg class="abs" style="left:1032px;top:1337px" width="24" height="24" viewBox="0 0 24 24" fill="none" stroke="#eeedf6" stroke-width="2" stroke-linecap="round" stroke-linejoin="round"><path d="M12 3 3 8l9 5 9-5z"/><path d="M3 12.5l9 5 9-5"/><path d="M3 17l9 5 9-5"/></svg>
<div class="abs t" style="left:1065px;top:1339px;font-size:19.5px;color:#eeedf6;white-space:nowrap">Screens</div>
<svg class="abs" style="left:1174px;top:1337px" width="24" height="24" viewBox="0 0 24 24" fill="none" stroke="#eeedf6" stroke-width="2" stroke-linecap="round" stroke-linejoin="round"><rect x="3" y="3" width="18" height="18" rx="2"/><path d="M3 9h18M3 15h18M9 3v18M15 3v18"/></svg>
<div class="abs t" style="left:1207px;top:1339px;font-size:19.5px;color:#eeedf6;white-space:nowrap">Panels</div>
<svg class="abs" style="left:1303px;top:1337px" width="24" height="24" viewBox="0 0 24 24" fill="none" stroke="#eeedf6" stroke-width="2" stroke-linecap="round" stroke-linejoin="round"><circle cx="6" cy="19" r="2.5"/><circle cx="18" cy="5" r="2.5"/><path d="M6 3v13.5"/><path d="M18 7.5a9 9 0 0 1-9 9"/></svg>
<div class="abs t" style="left:1336px;top:1339px;font-size:19.5px;color:#eeedf6;white-space:nowrap">Wiring</div>
<svg class="abs" style="left:1435px;top:1337px" width="24" height="24" viewBox="0 0 24 24" fill="none" stroke="#eeedf6" stroke-width="2" stroke-linecap="round" stroke-linejoin="round"><path d="M21 15v4a2 2 0 0 1-2 2H5a2 2 0 0 1-2-2v-4"/><path d="m7 10 5 5 5-5"/><path d="M12 15V3"/></svg>
<div class="abs t" style="left:1469px;top:1339px;font-size:19.5px;color:#eeedf6;white-space:nowrap">Export</div>
</body></html>
